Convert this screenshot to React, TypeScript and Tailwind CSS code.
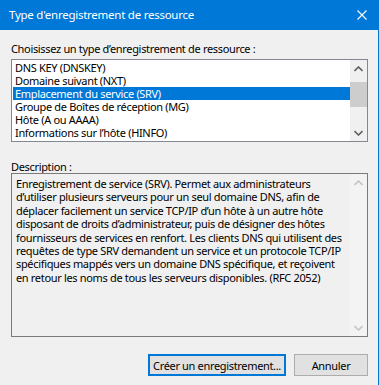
const items = [
    'DNS KEY (DNSKEY)',
    'Domaine suivant (NXT)',
    'Emplacement du service (SRV)',
    'Groupe de Boîtes de réception (MG)',
    'Hôte (A ou AAAA)',
    'Informations sur l\u2019hôte (HINFO)',
];

const descLines = [
    'Enregistrement de service (SRV). Permet aux administrateurs',
    'd\u2019utiliser plusieurs serveurs pour un seul domaine DNS, afin de',
    'déplacer facilement un service TCP/IP d\u2019un hôte à un autre hôte',
    'disposant de droits d\u2019administrateur, puis de désigner des hôtes',
    'fournisseurs de services en renfort. Les clients DNS qui utilisent des',
    'requêtes de type SRV demandent un service et un protocole TCP/IP',
    'spécifiques mappés vers un domaine DNS spécifique, et reçoivent',
    'en retour les noms de tous les serveurs disponibles. (RFC 2052)',
];

function Chevron({ up, color }: { up?: boolean; color: string }) {
    return (
        <svg width="9" height="6" viewBox="0 0 9 6">
            <polyline
                points={up ? '0.5,5 4.5,1 8.5,5' : '0.5,1 4.5,5 8.5,1'}
                fill="none"
                stroke={color}
                strokeWidth="1.6"
            />
        </svg>
    );
}

export default function App() {
    return (
        <div
            className="w-[379px] h-[385px] flex flex-col bg-[#f0f0f0] border-r border-[#0078d7] text-black"
            style={{ fontFamily: '"Segoe UI", "Noto Sans", sans-serif' }}
        >
            {/* Title bar */}
            <div className="h-[30px] shrink-0 flex items-center justify-between bg-[#0078d7] pl-[9px] pr-[10px] text-white">
                <span className="text-[11.5px] tracking-[-0.25px]">Type d'enregistrement de ressource</span>
                <svg width="10" height="10" viewBox="0 0 10 10" className="mr-[1px]">
                    <path d="M0.5 0.5 L9.5 9.5 M9.5 0.5 L0.5 9.5" stroke="#fff" strokeWidth="1.1" />
                </svg>
            </div>

            <div className="flex flex-col pl-[11px] pr-[10px] text-[11px] leading-[13px] tracking-[-0.33px]">
                <div className="pt-[12px] h-[29px]">Choisissez un type d’enregistrement de ressource :</div>

                {/* List box */}
                <div className="h-[83px] flex border border-[#828790] bg-white">
                    <div className="flex-1 py-[1px] pl-[1px]">
                        {items.map((it, i) => (
                            <div
                                key={it}
                                className={
                                    i === 2
                                        ? 'h-[13px] pl-[2px] bg-[#0078d7] text-white whitespace-nowrap'
                                        : 'h-[13px] pl-[2px] whitespace-nowrap'
                                }
                            >
                                {it}
                            </div>
                        ))}
                    </div>
                    <div className="w-[17px] flex flex-col bg-[#f0f0f0]">
                        <div className="h-[17px] flex items-center justify-center">
                            <Chevron up color="#606060" />
                        </div>
                        <div className="flex-1 flex flex-col pt-[5px]">
                            <div className="h-[25px] bg-[#cdcdcd]" />
                        </div>
                        <div className="h-[17px] flex items-center justify-center">
                            <Chevron color="#606060" />
                        </div>
                    </div>
                </div>

                <div className="pt-[18px] h-[31px]">Description :</div>

                {/* Description box */}
                <div className="h-[164px] flex border border-[#7a7a7a]">
                    <div className="flex-1 pl-[4px] pt-[3px] leading-[13.4px]">
                        {descLines.map((l, i) => (
                            <div key={i} className="whitespace-nowrap">
                                {l}
                            </div>
                        ))}
                    </div>
                    <div className="w-[17px] flex flex-col justify-between bg-[#f3f3f3]">
                        <div className="h-[17px] flex items-center justify-center">
                            <Chevron up color="#c5c5c5" />
                        </div>
                        <div className="h-[17px] flex items-center justify-center">
                            <Chevron color="#c5c5c5" />
                        </div>
                    </div>
                </div>

                {/* Buttons */}
                <div className="flex justify-end gap-[8px] pt-[17px]">
                    <button className="h-[22px] w-[138px] border-2 border-[#0078d7] bg-[#e1e1e1] whitespace-nowrap">
                        Créer un enregistrement...
                    </button>
                    <button className="h-[22px] w-[74px] border border-[#adadad] bg-[#e1e1e1]">Annuler</button>
                </div>
            </div>
        </div>
    );
}
